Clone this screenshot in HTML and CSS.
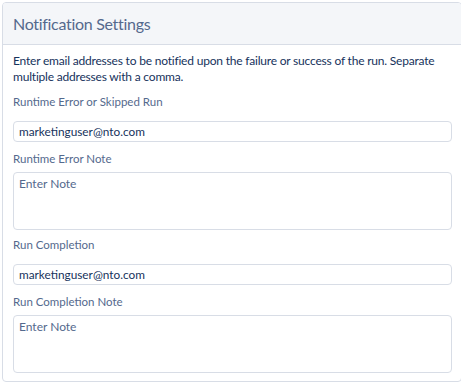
FILE: index.html
```html
<!DOCTYPE html>
<html>
<head>
<meta charset="utf-8">
<link rel="stylesheet" href="styles.css">
</head>
<body>
<div class="card">
  <div class="card-header">Notification Settings</div>
  <div class="card-body">
    <p class="desc">Enter email addresses to be notified upon the failure or success of the run. Separate multiple addresses with a comma.</p>
    <label class="label">Runtime Error or Skipped Run</label>
    <div class="input">marketinguser@nto.com</div>
    <label class="label label-area">Runtime Error Note</label>
    <div class="textarea">Enter Note</div>
    <label class="label">Run Completion</label>
    <div class="input">marketinguser@nto.com</div>
    <label class="label label-area">Run Completion Note</label>
    <div class="textarea">Enter Note</div>
  </div>
</div>
</body>
</html>
```
FILE: styles.css
```css
* { box-sizing: border-box; }
body {
  margin: 2px;
  font-family: "Lato", "Noto Sans", sans-serif;
  background: #fff;
  color: #16325c;
}
.card {
  width: 460px;
  height: 380px;
  border: 1px solid #d8dde6;
  border-radius: 4px;
  overflow: hidden;
  display: flex;
  flex-direction: column;
}
.card-header {
  background: #f4f6f9;
  border-bottom: 1px solid #d8dde6;
  height: 42px;
  padding: 0 10px;
  display: flex;
  align-items: center;
  font-size: 16px;
  letter-spacing: -0.3px;
  color: #54698d;
}
.card-body {
  padding: 8px 10px 0 10px;
  display: flex;
  flex-direction: column;
}
.desc {
  margin: 0 0 10.5px 0;
  font-size: 12px;
  letter-spacing: -0.2px;
  line-height: 16px;
  color: #16325c;
}
.label {
  display: block;
  font-size: 11.5px;
  color: #54698d;
  line-height: 14px;
  margin: 0 0 11.5px 0;
}
.label-area {
  margin-bottom: 6px;
}
.input {
  height: 21px;
  width: 439px;
  border: 1px solid #d8dde6;
  border-radius: 4px;
  padding: 0 5px;
  font-size: 11.8px;
  line-height: 19px;
  color: #16325c;
  margin-bottom: 10px;
}
.textarea {
  height: 58px;
  width: 439px;
  border: 1px solid #d8dde6;
  border-radius: 4px;
  padding: 3px 5px;
  font-size: 12px;
  line-height: 16px;
  color: #54698d;
  margin-bottom: 8.5px;
}
```
